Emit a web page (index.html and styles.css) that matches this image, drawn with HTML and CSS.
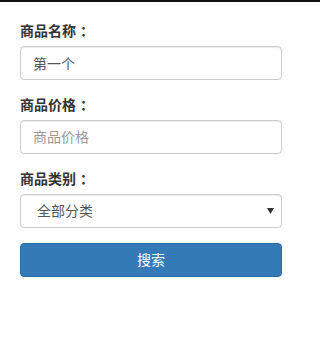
FILE: index.html
```html
<!DOCTYPE html>
<html lang="zh">
<head>
<meta charset="utf-8">
<link rel="stylesheet" href="styles.css">
</head>
<body>
<div class="topbar"></div>
<form class="form">
  <div class="group">
    <label class="label">商品名称<span class="colon">：</span></label>
    <input class="control" type="text" value="第一个">
  </div>
  <div class="group">
    <label class="label">商品价格<span class="colon">：</span></label>
    <input class="control" type="text" placeholder="商品价格">
  </div>
  <div class="group">
    <label class="label">商品类别<span class="colon">：</span></label>
    <div class="select-wrap">
      <select class="control select">
        <option>全部分类</option>
      </select>
      <svg class="arrow" width="7" height="6" viewBox="0 0 7 6"><polygon points="0,0 7,0 3.5,6" fill="#333"/></svg>
    </div>
  </div>
  <button class="btn" type="button">搜索</button>
</form>
</body>
</html>
```

FILE: styles.css
```css
* { box-sizing: border-box; }
html, body { margin: 0; padding: 0; background: #fff; }
body {
  font-family: "Liberation Sans", "Noto Sans CJK SC", sans-serif;
  font-size: 14px;
  line-height: 20px;
  color: #333;
}
.topbar { height: 2px; background: #111; }
.form { padding: 19px 0 0 20px; width: 282px; display: flex; flex-direction: column; }
.group { display: flex; flex-direction: column; margin-bottom: 15px; }
.label { font-weight: bold; margin-bottom: 5px; display: block; height: 20px; color: #333; }
.colon { margin-left: 4px; }
.control {
  display: block;
  width: 100%;
  height: 34px;
  padding: 6px 12px;
  font-family: inherit;
  font-size: 14px;
  line-height: 20px;
  color: #555;
  background: #fff;
  border: 1px solid #ccc;
  border-radius: 4px;
  box-shadow: inset 0 1px 1px rgba(0,0,0,.075);
  outline: none;
}
.control::placeholder { color: #999; }
.select-wrap { position: relative; }
.select { appearance: none; -webkit-appearance: none; padding-left: 16px; }
.arrow { position: absolute; right: 8px; top: 14px; pointer-events: none; }
.btn {
  display: block;
  width: 100%;
  height: 34px;
  padding: 6px 12px;
  font-family: inherit;
  font-size: 14px;
  line-height: 20px;
  color: #fff;
  background: #337ab7;
  border: 1px solid #2e6da4;
  border-radius: 4px;
}
```
